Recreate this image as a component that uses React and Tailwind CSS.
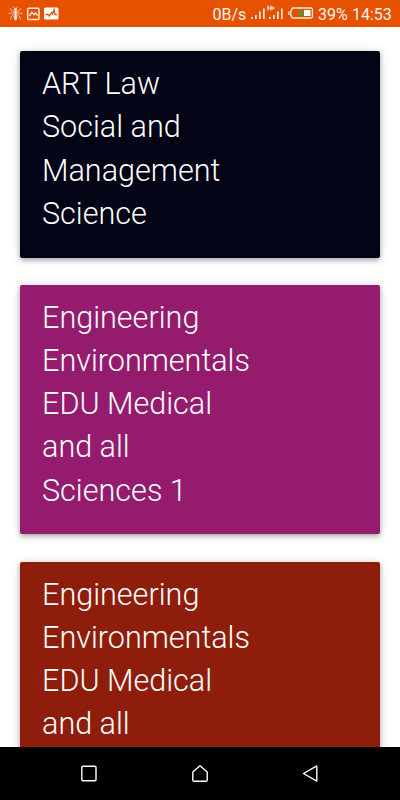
import React from "react";

const cards = [
  { color: "bg-[#040417]", size: "h-[206.5px]", inset: "pt-[11px]", lines: ["ART Law", "Social and", "Management", "Science"] },
  { color: "bg-[#951b6e]", size: "h-[249px]", inset: "pt-[10.5px]", lines: ["Engineering", "Environmentals", "EDU Medical", "and all", "Sciences 1"] },
  { color: "bg-[#8f1d0b]", size: "h-[249px]", inset: "pt-[11px]", lines: ["Engineering", "Environmentals", "EDU Medical", "and all"] },
];

function NotificationIcons() {
  return (
    <svg className="block" width="60" height="26" viewBox="0 0 60 26" fill="none" stroke="#ffe9df">
      <g strokeWidth="0.7" opacity="0.95">
        <path d="M15 9 13 6.500M16 9l2-2.500M14.500 11.500 11.500 10.500 10 8M16.500 11.500l3-1L21 8M14.500 12.500 11.500 13l-3 .5M16.500 12.500l3 .5 3 .5M14.500 13.500 11.500 16l-1 3.500M16.500 13.500l3 2.500 1 3.500" />
        <ellipse cx="15.500" cy="9.500" rx="1.200" ry="1.200" fill="#ffe9df" />
        <ellipse cx="15.500" cy="12.500" rx=".8" ry="2" fill="#ffe9df" />
        <ellipse cx="15.500" cy="17" rx="1.400" ry="3.100" fill="#ffe9df" />
      </g>
      <rect x="27.700" y="8.200" width="11.300" height="11.300" rx="1" strokeWidth="1.500" />
      <path d="m29.500 15.800 2.500-3.500 2 2.300 1.500-1.600 2.200 2.500" strokeWidth="1.400" />
      <rect x="44" y="7.500" width="14.500" height="12" rx="1.500" fill="#ffffff" stroke="none" />
      <path d="M45.500 14.500h2.500l1.500 1.500 2-3.500 1 1.500L54 9.500l1 5h2" stroke="#e65100" strokeWidth="1.300" />
    </svg>
  );
}

function SignalIcons() {
  return (
    <svg className="block" width="34" height="26" viewBox="0 0 34 26" fill="#ffe9df">
      <path d="M1 17h1.700v2H1zM5 15h1.700v4H5zM9 11.500h1.700V19H9zM13 8.500h1.700V19H13zM19 17h1.700v2H19zM23 15h1.700v4H23zM27 11.500h1.700V19H27zM31 8.500h1.700V19H31z" />
      <path d="M18 5.500v5M21 5.500v5M18 8h6.500M23 6.500v3" stroke="#ffe9df" strokeWidth="1.200" />
    </svg>
  );
}

function BatteryIcon() {
  return (
    <svg className="block" width="26" height="26" viewBox="0 0 26 26" fill="none">
      <path d="M.2 11.500h1.400v3.500H.2z" fill="#ffe9df" />
      <path d="M2.800 11.500 4.300 8H23q1.400 0 1.400 1.400v7.200Q24.400 18 23 18H4.300l-1.500-3z" stroke="#ffe9df" strokeWidth="1.300" />
      <path d="M16 10h6.500v6H16z" fill="#ffffff" />
      <path d="m14.500 8.500-5 5.500h2.700L11 18l5-5.700h-2.500z" fill="#14b84a" />
    </svg>
  );
}

function StatusBar() {
  return (
    <header className="flex h-[26.500px] shrink-0 items-start justify-between bg-[#e65100] text-[16px] text-[#fff5f0]">
      <NotificationIcons />
      <div className="flex h-[26px] pr-[9px]">
        <span className="w-[37.500px] whitespace-nowrap leading-[29px]">0B/s</span>
        <SignalIcons />
        <span className="w-[4px]" />
        <BatteryIcon />
        <span className="ml-[4px] w-[34px] whitespace-nowrap leading-[29px]">39%</span>
        <span className="w-[39px] whitespace-nowrap leading-[29px]">14:53</span>
      </div>
    </header>
  );
}

function NavigationBar() {
  return (
    <nav className="flex h-[53px] shrink-0 bg-black">
      <svg width="400" height="53" viewBox="0 0 400 53" fill="none" stroke="#ffffff" strokeWidth="1.400" strokeLinejoin="round">
        <rect x="81.800" y="19.300" width="14.200" height="14.400" rx="1" />
        <path d="M192.800 25 200 18.700l7.200 6.300v8q0 1.200-1.200 1.200h-12q-1.200 0-1.200-1.200z" />
        <path d="M316.800 18.900v15.200l-13.300-7.600z" />
      </svg>
    </nav>
  );
}

export default function App() {
  return (
    <div className="flex h-[800px] w-[400px] flex-col overflow-hidden bg-white font-['Roboto',sans-serif]">
      <StatusBar />
      <main className="flex min-h-0 flex-1 flex-col gap-[27.500px] overflow-hidden px-5 pt-[24.500px]">
        {cards.map((card, index) => (
          <section
            key={index}
            className={`${card.color} ${card.size} ${card.inset} shrink-0 rounded-[2px] pl-[21.800px] shadow-[0_2px_5px_rgba(0,0,0,0.3),0_1px_12px_rgba(0,0,0,0.12)]`}
          >
            {card.lines.map((line) => (
              <p key={line} className="origin-left scale-x-[0.955] text-[32px] font-light leading-[43.300px] text-white">{line}</p>
            ))}
          </section>
        ))}
      </main>
      <NavigationBar />
    </div>
  );
}
